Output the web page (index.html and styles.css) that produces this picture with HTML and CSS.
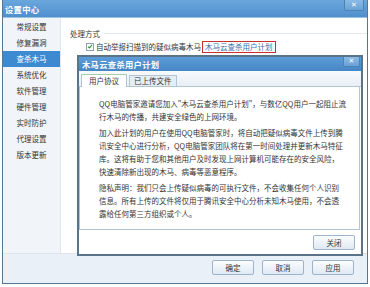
FILE: index.html
```html
<!DOCTYPE html>
<html lang="zh-CN">
<head>
<meta charset="utf-8">
<link rel="stylesheet" href="styles.css">
</head>
<body>
<div class="win">
  <div class="titlebar">
    <span class="title">设置中心</span>
    <span class="close">✕</span>
  </div>
  <div class="body">
    <ul class="side">
      <li>常规设置</li>
      <li>修复漏洞</li>
      <li class="active">查杀木马</li>
      <li>系统优化</li>
      <li>软件管理</li>
      <li>硬件管理</li>
      <li>实时防护</li>
      <li>代理设置</li>
      <li>版本更新</li>
    </ul>
    <div class="main">
      <div class="sect"><span>处理方式</span><span class="rule"></span></div>
      <div class="check-row">
        <span class="cb"><svg viewBox="0 0 7 7" width="7" height="7"><path d="M1.2 3.6 L2.8 5.2 L5.9 1.6" fill="none" stroke="#2f8a2f" stroke-width="1.2"/></svg></span>
        <span>自动举报扫描到的疑似病毒木马</span>
        <span class="plan">木马云查杀用户计划</span>
      </div>
    </div>
  </div>
  <div class="footer">
    <span class="btn">确定</span>
    <span class="btn">取消</span>
    <span class="btn">应用</span>
  </div>

  <div class="dialog">
    <div class="dtitle">
      <span class="title">木马云查杀用户计划</span>
      <span class="close small">✕</span>
    </div>
    <div class="tabs">
      <span class="tab on">用户协议</span>
      <span class="tab">已上传文件</span>
    </div>
    <div class="panel">
      <p>QQ电脑管家邀请您加入"木马云查杀用户计划"，与数亿QQ用户一起阻止流<br>行木马的传播，共建安全绿色的上网环境。</p>
      <p>加入此计划的用户在使用QQ电脑管家时，将自动把疑似病毒文件上传到腾<br>讯安全中心进行分析，QQ电脑管家团队将在第一时间处理并更新木马特征<br>库。这将有助于您和其他用户及时发现上网计算机可能存在的安全风险，<br>快速清除新出现的木马、病毒等恶意程序。</p>
      <p>隐私声明：我们只会上传疑似病毒的可执行文件，不会收集任何个人识别<br>信息。所有上传的文件将仅用于腾讯安全中心分析未知木马使用，不会透<br>露给任何第三方组织或个人。</p>
    </div>
    <div class="dfoot">
      <span class="btn">关闭</span>
    </div>
  </div>
</div>
</body>
</html>
```

FILE: styles.css
```css
* { box-sizing: border-box; }
html, body {
  margin: 0;
  padding: 0;
  background: #ffffff;
}
body {
  width: 370px;
  height: 287px;
  font-family: "Noto Sans CJK SC", "Noto Sans", sans-serif;
  font-size: 7.5px;
  color: #333;
  overflow: hidden;
}
.win {
  position: relative;
  margin-left: 2px;
  width: 366px;
  height: 284px;
  border: 1px solid #57768f;
  border-top: none;
  display: flex;
  flex-direction: column;
  background: #e9f0f7;
}
.titlebar {
  height: 18px;
  flex: none;
  background: linear-gradient(#6aa7dd, #4f8fcc);
  display: flex;
  align-items: center;
  justify-content: space-between;
  border-bottom: 1px solid #9cc3e6;
}
.title {
  color: #fff;
  font-weight: bold;
  font-size: 8.3px;
  padding-left: 2px;
  letter-spacing: 0.3px;
}
.close {
  align-self: flex-start;
  width: 20px;
  height: 11px;
  margin-right: 3px;
  background: linear-gradient(#8bbbe6, #6aa2d6);
  border: 1px solid #4d82b5;
  border-top: none;
  border-radius: 0 0 2px 2px;
  color: #fff;
  font-size: 7px;
  font-weight: bold;
  line-height: 10px;
  text-align: center;
  font-family: "DejaVu Sans", sans-serif;
}
.body {
  flex: none;
  height: 236px;
  display: flex;
  background: #fff;
  border-bottom: 1px solid #dde5ee;
}
.side {
  list-style: none;
  margin: 0;
  padding: 1px 0 0;
  width: 58px;
  flex: none;
  background: #f1f5f9;
  border-right: 1px solid #e1e7ee;
}
.side li {
  height: 16px;
  line-height: 16px;
  text-align: center;
  color: #333;
}
.side li.active {
  background: #3d8ad1;
  color: #fff;
}
.main {
  flex: 1;
  padding: 10px 0 0 9px;
}
.sect {
  display: flex;
  align-items: center;
  height: 10px;
}
.rule {
  flex: 1;
  height: 1px;
  margin-left: 4px;
  background: #e4e9ee;
}
.check-row {
  display: flex;
  align-items: center;
  height: 13px;
  margin-top: 2px;
  padding-left: 16px;
}
.cb {
  width: 8px;
  height: 8px;
  border: 1px solid #8c9fb2;
  background: #fff;
  display: flex;
  align-items: center;
  justify-content: center;
  margin-right: 2px;
}
.cb svg { display: block; }
.plan {
  margin-left: 1px;
  border: 1.5px solid #c8302e;
  padding: 0 2px;
  height: 12px;
  line-height: 9px;
  color: #3a6fab;
}
.footer {
  flex: 1;
  display: flex;
  justify-content: flex-end;
  align-items: center;
  gap: 8px;
  padding: 0 13px 2px 0;
}
.btn {
  width: 42px;
  height: 15px;
  line-height: 13px;
  text-align: center;
  border: 1px solid #9db4ca;
  border-radius: 2px;
  background: linear-gradient(#fbfdff, #dfe9f3);
  color: #333;
}
.dialog {
  position: absolute;
  left: 74px;
  top: 55px;
  width: 286px;
  height: 201px;
  border: 2px solid #5b7389;
  background: #fff;
  display: flex;
  flex-direction: column;
}
.dtitle {
  height: 14px;
  flex: none;
  background: linear-gradient(#5c9cd8, #4786c5);
  display: flex;
  align-items: center;
  justify-content: space-between;
}
.dtitle .title {
  padding-left: 3px;
}
.close.small {
  width: 17px;
  height: 10px;
  margin-right: 1px;
  line-height: 9px;
}
.tabs {
  height: 16px;
  flex: none;
  display: flex;
  align-items: flex-end;
  gap: 2px;
  padding-left: 2px;
  background: linear-gradient(#f7fafd, #e8eff6);
  border-bottom: 1px solid #b2c5d7;
}
.tab {
  height: 11px;
  padding: 0 4px;
  line-height: 10px;
  border: 1px solid #b2c5d7;
  border-bottom: none;
  background: #e5edf5;
  margin-bottom: 0;
}
.tab.on {
  height: 13px;
  width: 46px;
  text-align: center;
  background: #fff;
  line-height: 12px;
  margin-bottom: -1px;
  border-top-color: #a7cfa5;
}
.panel {
  margin: 0 1px 0 0;
  height: 143px;
  flex: none;
  border: 1px solid #b2c5d7;
  border-top: none;
  padding: 10px 0 0 19px;
  white-space: nowrap;
}
.panel p {
  margin: 0 0 3px;
  line-height: 13px;
}
.dfoot {
  flex: 1;
  display: flex;
  justify-content: flex-end;
  align-items: center;
  padding-right: 6px;
  background: #fff;
}
```
